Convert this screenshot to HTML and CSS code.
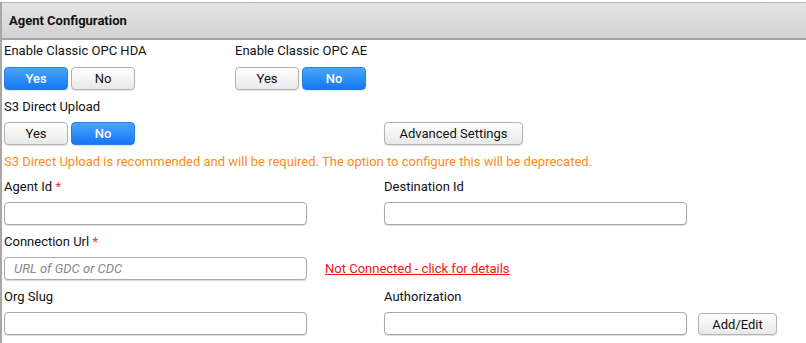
FILE: index.html
```html
<!DOCTYPE html>
<html lang="en">
<head>
  <meta charset="UTF-8">
  <title>Agent Configuration</title>
  <link rel="stylesheet" href="styles.css">
</head>
<body>
  <div class="panel">
    <div class="panel-header">Agent Configuration</div>
    <div class="panel-body">
      <div class="row first">
        <div class="field toggle-col">
          <label>Enable Classic OPC HDA</label>
          <div class="toggle">
            <button class="btn active">Yes</button>
            <button class="btn">No</button>
          </div>
        </div>
        <div class="field">
          <label>Enable Classic OPC AE</label>
          <div class="toggle">
            <button class="btn">Yes</button>
            <button class="btn active">No</button>
          </div>
        </div>
      </div>
      <div class="row">
        <div class="field col">
          <label>S3 Direct Upload</label>
          <div class="toggle">
            <button class="btn">Yes</button>
            <button class="btn active">No</button>
          </div>
        </div>
        <div class="field bottom">
          <button class="btn wide">Advanced Settings</button>
        </div>
      </div>
      <p class="warning">S3 Direct Upload is recommended and will be required. The option to configure this will be deprecated.</p>
      <div class="row">
        <div class="field col">
          <label>Agent Id <span class="req">*</span></label>
          <input type="text">
        </div>
        <div class="field">
          <label>Destination Id</label>
          <input type="text">
        </div>
      </div>
      <div class="row">
        <div class="field">
          <label>Connection Url <span class="req">*</span></label>
          <div class="inline">
            <input type="text" placeholder="URL of GDC or CDC">
            <a href="#" class="status">Not Connected - click for details</a>
          </div>
        </div>
      </div>
      <div class="row">
        <div class="field col">
          <label>Org Slug</label>
          <input type="text">
        </div>
        <div class="field">
          <label>Authorization</label>
          <div class="inline">
            <input type="text">
            <button class="btn edit">Add/Edit</button>
          </div>
        </div>
      </div>
    </div>
  </div>
</body>
</html>
```

FILE: styles.css
```css
body {
  margin: 0;
  font-family: Roboto, "Liberation Sans", sans-serif;
  font-size: 13px;
  color: #111;
  background: #fff;
}
.panel {
  margin-top: 2px;
  border-left: 2px solid #a8a8a8;
  min-height: 341px;
}
.panel-header {
  height: 35px;
  line-height: 35px;
  padding-left: 7px;
  font-weight: bold;
  border-top: 1px solid #b4b4b4;
  border-bottom: 2px solid #a4a4a4;
  background: linear-gradient(#e6e5e5, #d3d2d2);
}
.panel-body {
  padding-left: 2px;
}
.row {
  display: flex;
  margin-top: 9px;
}
.row.first {
  margin-top: 3px;
}
.field {
  display: flex;
  flex-direction: column;
}
.field.bottom {
  justify-content: flex-end;
}
.toggle-col {
  width: 231px;
}
.col {
  width: 380px;
}
label {
  line-height: 16px;
  margin-bottom: 7px;
}
.row.first label {
  margin-bottom: 8px;
}
.req {
  color: #f0303a;
}
.toggle {
  display: flex;
  gap: 3px;
}
.btn {
  font-family: Roboto, "Liberation Sans", sans-serif;
  font-size: 13px;
  color: #111;
  width: 64px;
  height: 23px;
  padding: 0;
  border: 1px solid #b3b3b3;
  border-radius: 4px;
  background: linear-gradient(#fefefe, #e9e9e9);
  box-shadow: 0 1px 1px rgba(0, 0, 0, 0.12);
}
.btn.active {
  color: #fff;
  font-weight: 500;
  border-color: #2a7fe0;
  background: linear-gradient(#4aa5ff, #1577f2);
}
.btn.wide {
  width: 139px;
}
.btn.edit {
  flex-shrink: 0;
  width: 79px;
  height: 22px;
  margin-left: 11px;
  margin-top: 1px;
}
.warning {
  margin: 9px 0 0;
  line-height: 16px;
  color: #fb8b24;
}
input {
  box-sizing: border-box;
  flex-shrink: 0;
  width: 303px;
  height: 23px;
  margin: 0;
  padding: 0 9px;
  font-family: Roboto, "Liberation Sans", sans-serif;
  font-size: 13px;
  border: 1px solid #a9a9a9;
  border-radius: 4px;
  box-shadow: 0 1px 1px rgba(0, 0, 0, 0.15);
}
input::placeholder {
  font-style: italic;
  color: #888;
}
.inline {
  display: flex;
  align-items: center;
}
.status {
  margin-left: 18px;
  white-space: nowrap;
  color: #f2131d;
  text-decoration: underline;
}
```
